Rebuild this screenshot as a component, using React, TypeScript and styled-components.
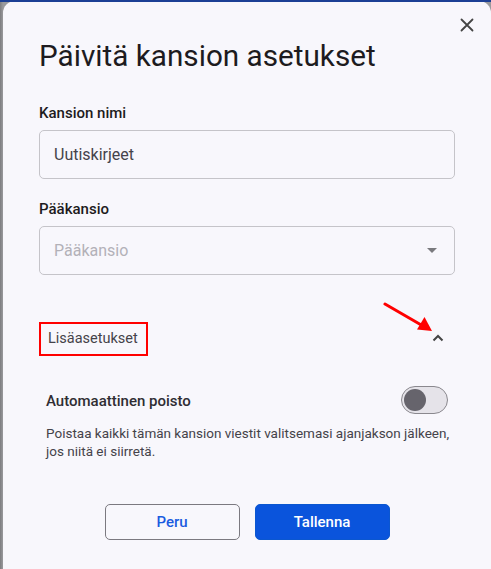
import styled, { createGlobalStyle } from 'styled-components';

const GlobalStyle = createGlobalStyle`
  html, body {
    margin: 0;
    padding: 0;
    background: #8b8b8d;
  }
  * {
    box-sizing: border-box;
  }
`;

const color = {
  TEXT: '#1d1b20',
  TEXT_SOFT: '#45434a',
  BORDER: '#c5c4c9',
  OUTLINE: '#7b7980',
  BLUE: '#0b57d0',
  SURFACE: '#f8f7fc',
};

const App = () => {
  return (
    <>
      <GlobalStyle />
      <Backdrop>
        <Dialog>
          <CloseButton aria-label="Sulje">
            <svg width="14" height="14" viewBox="0 0 14 14">
              <path d="M1.5 1.5l11 11M12.5 1.5l-11 11" stroke="#444" strokeWidth="1.8" strokeLinecap="round" />
            </svg>
          </CloseButton>

          <Title>Päivitä kansion asetukset</Title>

          <Field>
            <Label>Kansion nimi</Label>
            <InputBox>
              <InputText>Uutiskirjeet</InputText>
            </InputBox>
          </Field>

          <Field>
            <Label>Pääkansio</Label>
            <InputBox>
              <InputText $placeholder>Pääkansio</InputText>
              <svg width="10" height="5" viewBox="0 0 10 5">
                <path d="M0 0h10L5 5z" fill="#7a7a7e" />
              </svg>
            </InputBox>
          </Field>

          <Advanced>
            <AdvancedHeader>
              <AdvancedToggle>Lisäasetukset</AdvancedToggle>
              <svg width="12" height="8" viewBox="0 0 12 8">
                <path d="M1.5 6.5L6 2l4.5 4.5" stroke="#444" strokeWidth="2" fill="none" />
              </svg>
              <Arrow width="52" height="32" viewBox="0 0 52 32">
                <path d="M2 2L40 24" stroke="#ff0000" strokeWidth="3" strokeLinecap="round" />
                <path d="M49 29L34 27.5L41.5 15z" fill="#ff0000" />
              </Arrow>
            </AdvancedHeader>

            <SettingRow>
              <SettingTitle>Automaattinen poisto</SettingTitle>
              <Switch>
                <Thumb />
              </Switch>
            </SettingRow>
            <SettingText>
              Poistaa kaikki tämän kansion viestit valitsemasi ajanjakson jälkeen, jos niitä ei siirretä.
            </SettingText>
          </Advanced>

          <Actions>
            <Button>Peru</Button>
            <Button $primary>Tallenna</Button>
          </Actions>
        </Dialog>
      </Backdrop>
    </>
  );
};

export default App;

const Backdrop = styled.div`
  width: 491px;
  height: 569px;
  overflow: hidden;
  border-top: 2px solid #1c3f95;
  padding-left: 3px;
  background: linear-gradient(90deg, #7d7d80 0, #9a9a9d 3px);
`;

const Dialog = styled.div`
  position: relative;
  display: flex;
  flex-direction: column;
  width: 488px;
  height: 580px;
  margin-top: -1px;
  padding: 37px 36px 0;
  border-radius: 12px;
  background-color: ${color.SURFACE};
  font-family: Roboto, 'Liberation Sans', sans-serif;
  color: ${color.TEXT};
`;

const CloseButton = styled.button`
  position: absolute;
  top: 12px;
  right: 12px;
  display: flex;
  align-items: center;
  justify-content: center;
  width: 24px;
  height: 24px;
  padding: 0;
  border: none;
  background: none;
  cursor: pointer;
`;

const Title = styled.h1`
  margin: 0 0 29px;
  font-size: 29.7px;
  line-height: 36px;
  font-weight: 400;
  letter-spacing: 0;
`;

const Field = styled.div`
  display: flex;
  flex-direction: column;
  gap: 7px;
  margin-bottom: 20px;
`;

const Label = styled.div`
  font-size: 15px;
  line-height: 20px;
  font-weight: 500;
  color: ${color.TEXT};
`;

const InputBox = styled.div`
  display: flex;
  align-items: center;
  justify-content: space-between;
  height: 49px;
  padding: 0 17px 0 14px;
  border: 1px solid ${color.BORDER};
  border-radius: 5px;
`;

const InputText = styled.span<{ $placeholder?: boolean }>`
  font-size: 16px;
  color: ${({ $placeholder }) => ($placeholder ? '#b3b1b8' : color.TEXT_SOFT)};
`;

const Advanced = styled.div`
  display: flex;
  flex-direction: column;
  margin-top: 27px;
`;

const AdvancedHeader = styled.div`
  position: relative;
  display: flex;
  align-items: center;
  justify-content: space-between;
  padding-right: 11px;

  > svg {
    margin-top: -2px;
  }
`;

const AdvancedToggle = styled.div`
  display: flex;
  align-items: center;
  width: 109px;
  height: 34px;
  padding: 0 7px 1px;
  border: 2px solid #ff0000;
  font-size: 14.5px;
  color: ${color.TEXT_SOFT};
`;

const Arrow = styled.svg`
  position: absolute;
  top: -18px;
  right: 20px;
`;

const SettingRow = styled.div`
  display: flex;
  align-items: center;
  justify-content: space-between;
  margin-top: 30px;
  padding: 0 7px;
`;

const SettingTitle = styled.div`
  padding-top: 2px;
  font-size: 15px;
  font-weight: 500;
  color: #2f2d33;
`;

const Switch = styled.div`
  display: flex;
  align-items: center;
  width: 47px;
  height: 28px;
  padding: 0 2px;
  border: 1.5px solid #8a888e;
  border-radius: 14px;
  background: #e5e3e9;
`;

const Thumb = styled.div`
  width: 22px;
  height: 22px;
  border-radius: 50%;
  background: #66646c;
`;

const SettingText = styled.p`
  margin: 10px 0 0;
  padding: 0 0 0 7px;
  font-size: 13.5px;
  line-height: 18px;
  color: ${color.TEXT_SOFT};
`;

const Actions = styled.div`
  display: flex;
  justify-content: center;
  gap: 15px;
  margin-top: 44px;
`;

const Button = styled.button<{ $primary?: boolean }>`
  width: 135px;
  height: 36px;
  border-radius: 5px;
  border: 1px solid ${({ $primary }) => ($primary ? color.BLUE : color.OUTLINE)};
  background: ${({ $primary }) => ($primary ? '#0a54dc' : 'transparent')};
  color: ${({ $primary }) => ($primary ? '#ffffff' : '#1a5be0')};
  font-family: Roboto, 'Liberation Sans', sans-serif;
  font-size: 15px;
  font-weight: 500;
  cursor: pointer;
`;
